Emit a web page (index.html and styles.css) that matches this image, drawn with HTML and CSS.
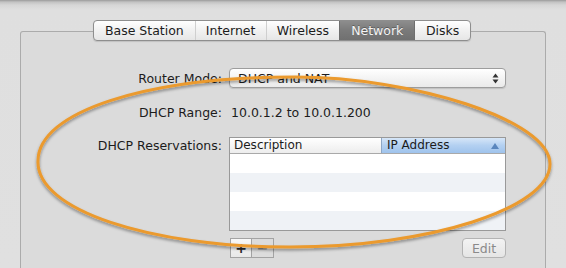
FILE: index.html
```html
<html lang="en">
<head>
  <meta charset="UTF-8" />
  <meta name="viewport" content="width=device-width, initial-scale=1.0" />
  <title>Network</title>
  <link rel="stylesheet" href="styles.css">
</head>
<body>
  <div class="window">
    <nav class="tabs">
      <span class="tab tab-base">Base Station</span>
      <span class="tab tab-internet">Internet</span>
      <span class="tab tab-wireless">Wireless</span>
      <span class="tab tab-network selected">Network</span>
      <span class="tab tab-disks">Disks</span>
    </nav>

    <div class="group">
      <div class="form">
        <span class="field-label">Router Mode:</span>
        <div class="popup">
          <span>DHCP and NAT</span>
          <svg class="popup-arrows" width="7" height="11" viewBox="0 0 7 11">
            <path d="M3.5 0.5 L6.5 4.5 L0.5 4.5 Z" fill="#333" />
            <path d="M3.5 10.5 L6.5 6.5 L0.5 6.5 Z" fill="#333" />
          </svg>
        </div>

        <span class="field-label">DHCP Range:</span>
        <span class="field-value">10.0.1.2 to 10.0.1.200</span>

        <span class="field-label label-top">DHCP Reservations:</span>
        <div class="reservations">
          <div class="table">
            <div class="table-head">
              <span class="col-desc">Description</span>
              <span class="col-ip">IP Address <i class="sort-arrow"></i></span>
            </div>
            <div class="row"></div>
            <div class="row"></div>
            <div class="row"></div>
            <div class="row"></div>
          </div>
          <div class="table-actions">
            <div class="segmented">
              <span class="seg-btn seg-add">+</span>
              <span class="seg-btn seg-remove">−</span>
            </div>
            <span class="edit-btn">Edit</span>
          </div>
        </div>
      </div>
    </div>

    <!-- hand-drawn highlight around the DHCP settings -->
    <svg class="annotation" width="566" height="268" viewBox="0 0 566 268">
      <defs>
        <filter id="shade" x="-10%" y="-10%" width="120%" height="130%">
          <feDropShadow dx="0" dy="2" stdDeviation="1.4" flood-color="#000" flood-opacity="0.4" />
        </filter>
      </defs>
      <path d="M38 161 C38 112 145 77 295 77 C412 77 550 120 550 164 C550 208 430 247 290 247 C150 247 36 210 38 161 Z"
            fill="none" stroke="#eb9a2e" stroke-width="3" filter="url(#shade)" />
    </svg>
  </div>
</body>
</html>
```

FILE: styles.css
```css
body {
  margin: 0;
  width: 566px;
  height: 268px;
  overflow: hidden;
  font-family: "DejaVu Sans", sans-serif;
  font-size: 12.5px;
  color: #1c1c1c;
  background: linear-gradient(to bottom, #9a9a9a 0, #c2c2c2 2px, #d6d6d6 5px, #dfdfdf 10px, #e0e0e0 100%);
}
.window {
  position: relative;
  height: 268px;
  padding-top: 20px;
  box-sizing: border-box;
}
.tabs {
  position: relative;
  z-index: 1;
  display: flex;
  width: 378px;
  height: 21px;
  margin-left: 93px;
  box-sizing: border-box;
  border: 1px solid #8e8e8e;
  border-radius: 4px;
  overflow: hidden;
  background: linear-gradient(to bottom, #ffffff, #f1f1f1 50%, #e6e6e6);
  box-shadow: 0 1px 1px rgba(0, 0, 0, 0.12);
}
.tab {
  display: flex;
  align-items: center;
  justify-content: center;
  border-left: 1px solid #cfcfcf;
  box-sizing: border-box;
  line-height: 19px;
}
.tab:first-child {
  border-left: none;
}
.tab-base { width: 101px; }
.tab-internet { width: 71px; }
.tab-wireless { width: 74px; }
.tab-network { width: 75px; }
.tab-disks { width: 56px; }
.tab.selected {
  color: #f4f4f4;
  border-left-color: #6e6e6e;
  background: linear-gradient(to bottom, #8d8d8d, #7a7a7a 50%, #707070);
  text-shadow: 0 -1px 0 rgba(0, 0, 0, 0.3);
}
.tab.selected + .tab {
  border-left-color: #6e6e6e;
}
.group {
  margin-top: -10px;
  margin-left: 20px;
  width: 526px;
  height: 237px;
  box-sizing: border-box;
  border: 1px solid #ababab;
  border-bottom: none;
  border-radius: 3px 3px 0 0;
  background: #dbdbdb;
  padding-top: 36px;
}
.form {
  display: grid;
  grid-template-columns: 201px 277px;
  column-gap: 7px;
  row-gap: 15px;
  align-items: center;
}
.field-label {
  text-align: right;
  line-height: 19px;
}
.label-top {
  align-self: start;
  line-height: 18px;
}
.field-value {
  padding-left: 2px;
  line-height: 19px;
}
.popup {
  display: flex;
  align-items: center;
  justify-content: space-between;
  height: 20px;
  box-sizing: border-box;
  padding: 0 6px 0 8px;
  border: 1px solid #9d9d9d;
  border-radius: 4px;
  background: linear-gradient(to bottom, #ffffff, #f3f3f3 55%, #eaeaea);
  box-shadow: 0 1px 1px rgba(0, 0, 0, 0.12);
}
.popup-arrows {
  display: block;
}
.reservations {
  align-self: start;
}
.table {
  border: 1px solid #999999;
  background: #ffffff;
}
.table-head {
  display: grid;
  grid-template-columns: 151px 1fr;
  height: 16px;
  box-sizing: border-box;
  border-bottom: 1px solid #a9a9a9;
  font-size: 12px;
  line-height: 15px;
}
.col-desc {
  padding-left: 4px;
  background: linear-gradient(to bottom, #ffffff, #ededed);
}
.col-ip {
  display: flex;
  align-items: center;
  justify-content: space-between;
  padding: 0 6px 0 5px;
  border-left: 1px solid #8da7c6;
  background: linear-gradient(to bottom, #d6e6f8, #b3d0f1 50%, #9fc3ec);
}
.sort-arrow {
  width: 0;
  height: 0;
  border-left: 4px solid transparent;
  border-right: 4px solid transparent;
  border-bottom: 6px solid #5a86bd;
}
.row {
  height: 19px;
}
.row:nth-child(odd) {
  background: #eff2f6;
}
.table-actions {
  display: flex;
  justify-content: space-between;
  align-items: center;
  margin-top: 7px;
}
.segmented {
  display: flex;
  margin-left: 1px;
}
.seg-btn {
  width: 22px;
  height: 20px;
  box-sizing: border-box;
  display: flex;
  align-items: center;
  justify-content: center;
  border: 1px solid #a3a3a3;
  font-weight: bold;
  font-size: 14px;
  background: #e6e6e6;
}
.seg-add {
  color: #2a2a2a;
  background: linear-gradient(to bottom, #f8f8f8, #e8e8e8);
}
.seg-remove {
  border-left: none;
  color: #8e8e8e;
  background: #dcdcdc;
}
.edit-btn {
  width: 44px;
  height: 20px;
  box-sizing: border-box;
  display: flex;
  align-items: center;
  justify-content: center;
  border: 1px solid #b3b3b3;
  border-radius: 4px;
  color: #8a8a8a;
  background: linear-gradient(to bottom, #f3f3f3, #e5e5e5);
}
.annotation {
  position: absolute;
  left: 0;
  top: 0;
  pointer-events: none;
}
```
